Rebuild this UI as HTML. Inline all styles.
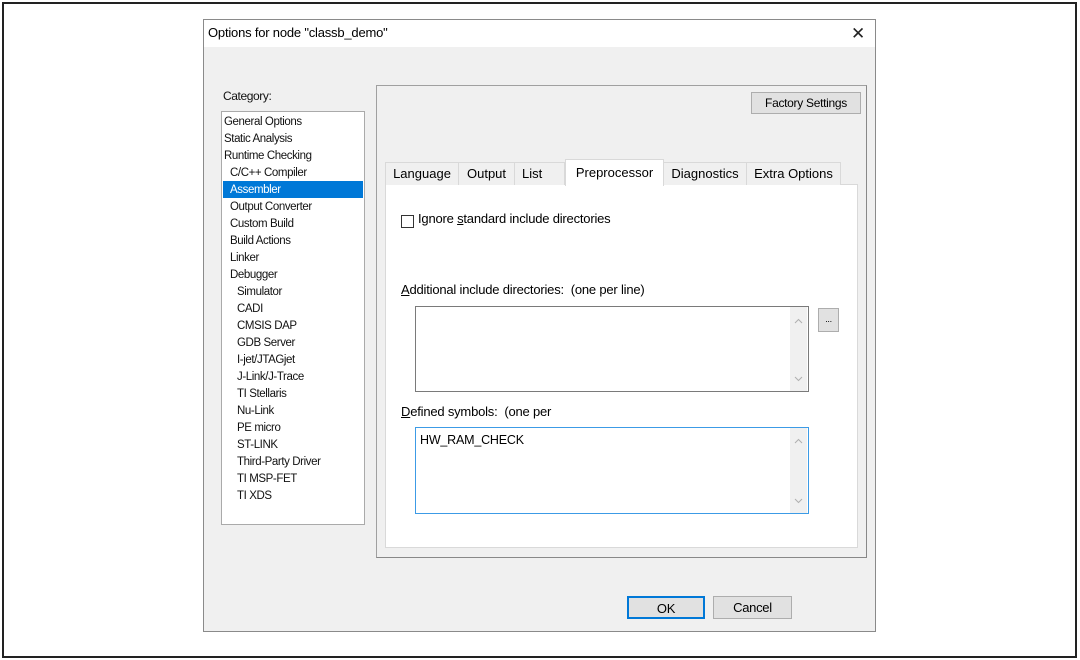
<!DOCTYPE html>
<html><head><meta charset="utf-8"><style>
*{margin:0;padding:0;box-sizing:border-box}
body{width:1080px;height:660px;background:#fff;position:relative;overflow:hidden;font-family:"Liberation Sans","Noto Sans CJK SC",sans-serif;color:#000}
.a{position:absolute}
.frame{left:2px;top:2px;width:1075px;height:656px;border:2px solid #222}
.dlg{left:203px;top:19px;width:673px;height:613px;background:#f0f0f0;border:1px solid #8a8a8a}
.title{left:204px;top:20px;width:671px;height:27px;background:#fff}
.t{font-size:13px;white-space:nowrap;letter-spacing:-0.2px}
.li{font-size:11.5px;letter-spacing:-0.4px;white-space:nowrap;color:#111}
.btn{background:#e1e1e1;border:1px solid #adadad;font-size:12px;text-align:center;letter-spacing:-0.3px}
.tab{top:162px;height:23px;background:#f0f0f0;border:1px solid #d9d9d9;border-bottom:none;font-size:13px;text-align:center;line-height:22px}
.ta{background:#fff;border:1px solid #7a7a7a}
.sb{background:#f0f0f0;width:17px}
</style></head><body>
<div class="a frame"></div>
<div class="a dlg"></div>
<div class="a title"></div>
<div class="a t" style="left:208px;top:25px">Options for node "classb_demo"</div>
<div class="a" style="left:851px;top:24px;font-size:17px;color:#222">✕</div>

<div class="a li" style="left:223px;top:89px;font-size:12px">Category:</div>
<div class="a" style="left:221px;top:111px;width:144px;height:414px;background:#fff;border:1px solid #aaa"></div>
<div class="a" style="left:223px;top:181px;width:140px;height:17px;background:#0078d7"></div>
<div class="a li" style="left:224px;top:114px;line-height:17px">General Options<br>Static Analysis<br>Runtime Checking</div>
<div class="a li" style="left:230px;top:165px;line-height:17px">C/C++ Compiler<br><span style="color:#fff">Assembler</span><br>Output Converter<br>Custom Build<br>Build Actions<br>Linker<br>Debugger</div>
<div class="a li" style="left:237px;top:284px;line-height:17px">Simulator<br>CADI<br>CMSIS DAP<br>GDB Server<br>I-jet/JTAGjet<br>J-Link/J-Trace<br>TI Stellaris<br>Nu-Link<br>PE micro<br>ST-LINK<br>Third-Party Driver<br>TI MSP-FET<br>TI XDS</div>

<div class="a" style="left:376px;top:85px;width:491px;height:473px;border:1px solid #a0a0a0;border-right-color:#888;border-bottom-color:#888"></div>
<div class="a btn" style="left:751px;top:92px;width:110px;height:22px;line-height:20px">Factory Settings</div>

<div class="a" style="left:385px;top:184px;width:473px;height:364px;background:#fff;border:1px solid #d9d9d9"></div>
<div class="a tab" style="left:385px;width:74px">Language</div>
<div class="a tab" style="left:458px;width:57px">Output</div>
<div class="a tab" style="left:514px;width:51px;text-align:left;padding-left:7px">List</div>
<div class="a tab" style="left:565px;top:159px;height:27px;width:99px;background:#fff;line-height:26px">Preprocessor</div>
<div class="a tab" style="left:663px;width:84px">Diagnostics</div>
<div class="a tab" style="left:746px;width:95px">Extra Options</div>

<div class="a" style="left:401px;top:215px;width:13px;height:13px;background:#fff;border:1px solid #333"></div>
<div class="a t" style="left:418px;top:211px">Ignore <u>s</u>tandard include directories</div>
<div class="a t" style="left:401px;top:282px"><u>A</u>dditional include directories:&nbsp; (one per line)</div>
<div class="a ta" style="left:415px;top:306px;width:394px;height:86px"></div>
<div class="a sb" style="left:790px;top:307px;height:84px"><svg width="17" height="84"><path d="M5 16l3.5-3.5L12 16M5 70l3.5 3.5L12 70" fill="none" stroke="#b0b0b0" stroke-width="1"/></svg></div>
<div class="a btn" style="left:818px;top:308px;width:21px;height:24px;font-size:9px;line-height:20px">...</div>
<div class="a t" style="left:401px;top:404px"><u>D</u>efined symbols:&nbsp; (one per</div>
<div class="a ta" style="left:415px;top:427px;width:394px;height:87px;border-color:#3c9be6"></div>
<div class="a sb" style="left:790px;top:428px;height:85px"><svg width="17" height="85"><path d="M5 15l3.5-3.5L12 15M5 71l3.5 3.5L12 71" fill="none" stroke="#b0b0b0" stroke-width="1"/></svg></div>
<div class="a t" style="left:420px;top:433px;font-size:12.5px">HW_RAM_CHECK</div>

<div class="a btn" style="left:627px;top:596px;width:78px;height:23px;line-height:21px;border:2px solid #0078d7;font-size:13px">OK</div>
<div class="a btn" style="left:713px;top:596px;width:79px;height:23px;line-height:21px;font-size:13px">Cancel</div>
</body></html>
